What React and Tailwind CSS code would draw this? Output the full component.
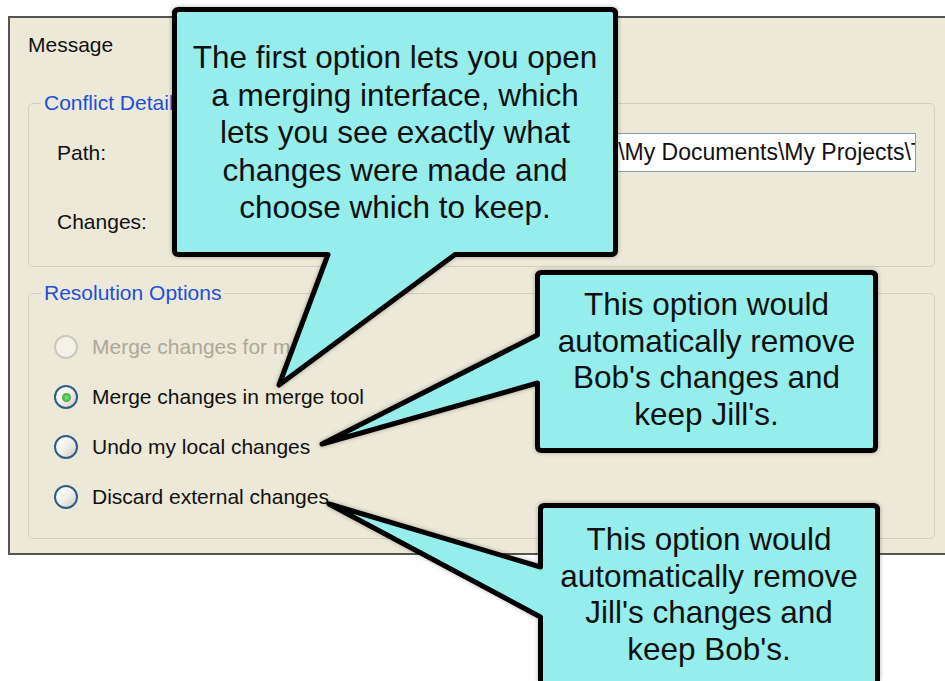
import React from 'react';

const UI_FONT = "font-['Liberation_Sans',Arial,sans-serif]";

function Radio({ checked, disabled, label }) {
  return (
    <div className="flex items-center gap-[14px] h-[24px] pl-[25px]">
      <span
        className={`relative w-[24px] h-[24px] rounded-full border-2 flex items-center justify-center flex-shrink-0 ${
          disabled
            ? 'border-[#cac8bb] bg-[#f3f1e8]'
            : 'border-[#2f5d87] bg-linear-to-br from-white via-[#f1f0ea] to-[#cfccbf]'
        }`}
      >
        {checked && (
          <span className="w-[9px] h-[9px] rounded-full bg-radial from-[#7fe07f] to-[#1e9a1e]" />
        )}
      </span>
      <span className={`text-[21px] leading-[24px] ${disabled ? 'text-[#aca899]' : 'text-[#111]'}`}>
        {label}
      </span>
    </div>
  );
}

function GroupBox({ title, className, children }) {
  return (
    <fieldset className={`border border-[#d0d0bf] rounded-[5px] w-[907px] ${className}`}>
      <legend className="ml-[12px] px-[3px] text-[21px] leading-[24px] text-[#1f4fd8]">{title}</legend>
      {children}
    </fieldset>
  );
}

export default function App() {
  return (
    <div className={`relative w-[945px] h-[681px] bg-white overflow-hidden ${UI_FONT}`}>
      {/* Dialog */}
      <div className="ml-[8px] mt-[16px] w-[945px] h-[539px] border-2 border-[#555] bg-[#ece9d8] pl-[18px] flex flex-col">
        <div className="mt-[15px] text-[21px] leading-[24px] text-[#111]">Message</div>

        <GroupBox title="Conflict Details" className="mt-[34px] h-[176px]">
          <div className="mt-[18px] h-[39px] flex items-center">
            <span className="w-[170px] pl-[28px] text-[21px] text-[#111]">Path:</span>
            <div className="flex-1 mr-[18px] h-[39px] border border-[#7f9db9] bg-white overflow-hidden flex items-center justify-end">
              <span className="whitespace-nowrap text-[23px] text-[#111] -mr-[38px]">
                C:\Documents and Settings\Bob\My Documents\My Projects\Test
              </span>
            </div>
          </div>
          <div className="mt-[38px] pl-[28px] text-[21px] leading-[24px] text-[#111]">Changes:</div>
        </GroupBox>

        <GroupBox title="Resolution Options" className="mt-[14px] h-[258px]">
          <div className="mt-[30px] flex flex-col gap-[26px]">
            <Radio disabled label="Merge changes for me" />
            <Radio checked label="Merge changes in merge tool" />
            <Radio label="Undo my local changes" />
            <Radio label="Discard external changes" />
          </div>
        </GroupBox>
      </div>

      {/* Callout shapes */}
      <svg
        className="absolute left-0 top-0 pointer-events-none drop-shadow-[0_0_2px_rgba(0,0,0,0.3)]"
        width="945"
        height="681"
        viewBox="0 0 945 681"
      >
        <g fill="#95eeeb" stroke="#000" strokeWidth="5" strokeLinejoin="round">
          <path d="M178.5,9.5 H611.5 Q615.5,9.5 615.5,13.5 V250.5 Q615.5,254.5 611.5,254.5 H455 L279,385 L328,254.5 H178.5 Q174.5,254.5 174.5,250.5 V13.5 Q174.5,9.5 178.5,9.5 Z" />
          <path d="M541.5,272.5 H871.5 Q875.5,272.5 875.5,276.5 V446.5 Q875.5,450.5 871.5,450.5 H541.5 Q537.5,450.5 537.5,446.5 V383 L322,444 L537.5,335 V276.5 Q537.5,272.5 541.5,272.5 Z" />
          <path d="M544.5,505.5 H873.5 Q877.5,505.5 877.5,509.5 V700 H540.5 V617 L329,504 L540.5,567 V509.5 Q540.5,505.5 544.5,505.5 Z" />
        </g>
      </svg>

      {/* Callout texts */}
      <div className="absolute left-[172px] top-[39px] w-[446px] text-center text-[31.5px] leading-[37.5px] text-[#111]">
        The first option lets you open
        <br />a merging interface, which
        <br />lets you see exactly what
        <br />changes were made and
        <br />choose which to keep.
      </div>
      <div className="absolute left-[535px] top-[286px] w-[343px] text-center text-[31.5px] leading-[36.7px] text-[#111]">
        This option would
        <br />automatically remove
        <br />Bob's changes and
        <br />keep Jill's.
      </div>
      <div className="absolute left-[538px] top-[521px] w-[342px] text-center text-[31.5px] leading-[36.7px] text-[#111]">
        This option would
        <br />automatically remove
        <br />Jill's changes and
        <br />keep Bob's.
      </div>
    </div>
  );
}
